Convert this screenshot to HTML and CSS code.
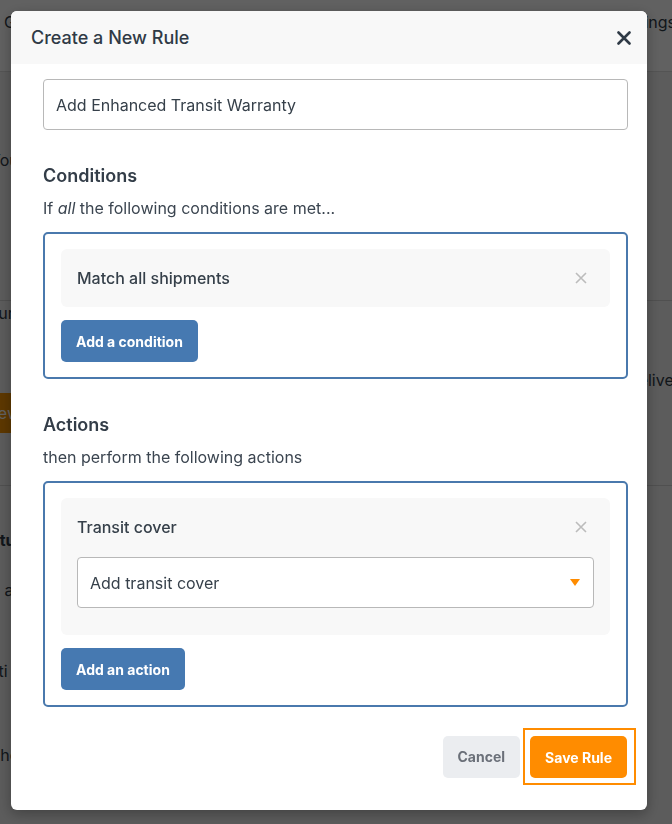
FILE: index.html
```html
<!DOCTYPE html>
<html lang="en">
<head>
    <meta charset="UTF-8">
    <meta name="viewport" content="width=device-width, initial-scale=1.0">
    <title>Create a New Rule</title>
    <link rel="stylesheet" href="styles.css">
</head>
<body>

    <!-- Page behind the modal -->
    <div class="page">
        <div class="page-top">
            <span class="peek">Go</span>
            <span class="peek-right">Settings</span>
        </div>
        <div class="page-row first">
            <p class="peek you">You</p>
        </div>
        <div class="page-row second">
            <p class="peek our">Our</p>
            <div class="page-line">
                <span class="page-btn">New</span>
                <span class="peek-right">Delivery</span>
            </div>
        </div>
        <div class="page-row third">
            <p class="peek status">Status</p>
            <p class="peek about"><span class="link">i</span> a</p>
            <p class="peek cond">Conditi<br>Te</p>
            <p class="peek the">The</p>
        </div>
    </div>

    <!-- Create Rule Modal -->
    <div class="overlay">
        <div class="modal">
            <div class="modal-header">
                <h2>Create a New Rule</h2>
                <span class="close">
                    <svg width="14" height="14" viewBox="0 0 14 14"><path d="M1.5 1.5 L12.5 12.5 M12.5 1.5 L1.5 12.5" stroke="#2f3a46" stroke-width="2.6" stroke-linecap="round"/></svg>
                </span>
            </div>

            <div class="modal-body">
                <div class="field">Add Enhanced Transit Warranty</div>

                <h3>Conditions</h3>
                <p class="hint">If <em>all</em> the following conditions are met...</p>
                <div class="rule-box">
                    <div class="rule-item">
                        <div class="rule-item-head">
                            <span>Match all shipments</span>
                            <span class="remove">
                                <svg width="12" height="12" viewBox="0 0 12 12"><path d="M1 1 L11 11 M11 1 L1 11" stroke="#bcbcbc" stroke-width="1.6"/></svg>
                            </span>
                        </div>
                    </div>
                    <button class="btn btn-blue">Add a condition</button>
                </div>

                <h3>Actions</h3>
                <p class="hint">then perform the following actions</p>
                <div class="rule-box">
                    <div class="rule-item padded">
                        <div class="rule-item-head">
                            <span>Transit cover</span>
                            <span class="remove">
                                <svg width="12" height="12" viewBox="0 0 12 12"><path d="M1 1 L11 11 M11 1 L1 11" stroke="#bcbcbc" stroke-width="1.6"/></svg>
                            </span>
                        </div>
                        <div class="field select">
                            <span>Add transit cover</span>
                            <span class="caret"></span>
                        </div>
                    </div>
                    <button class="btn btn-blue">Add an action</button>
                </div>
            </div>

            <div class="modal-footer">
                <button class="btn btn-grey">Cancel</button>
                <span class="focus-ring">
                    <button class="btn btn-orange">Save Rule</button>
                </span>
            </div>
        </div>
    </div>

</body>
</html>
```

FILE: styles.css
```css
/* General Styles */
body {
    font-family: Inter, "Noto Sans", sans-serif;
    margin: 0;
    padding: 0;
    background-color: #f1f1f1;
    color: #36404a;
}

/* Page behind */
.page {
    height: 824px;
    overflow: hidden;
    font-size: 16px;
    line-height: 20px;
    color: #2f3a46;
}

.page-top {
    height: 72px;
    background-color: #fff;
    border-bottom: 1px solid #ddd;
    display: flex;
    justify-content: space-between;
    align-items: flex-start;
    padding-top: 12px;
    box-sizing: border-box;
}

.page-top .peek {
    margin-left: 4px;
}

.page-top .peek-right {
    margin-right: -4px;
}

.page-row {
    display: flow-root;
    border-bottom: 1px solid #d2d2d2;
    box-sizing: border-box;
}

.page-row p {
    margin: 0;
}

.page-row.first {
    height: 229px;
}

.page-row.second {
    height: 185px;
}

.page-row.third {
    border-bottom: none;
}

.peek.you {
    margin: 78px 0 0 -10px;
}

.peek.our {
    margin: 2px 0 0 -14px;
}

.page-line {
    display: flex;
    justify-content: space-between;
    align-items: flex-start;
}

.page-btn {
    margin-top: 70px;
    width: 60px;
    height: 40px;
    margin-left: -40px;
    background-color: #f39200;
    color: #fff;
    line-height: 40px;
    text-align: right;
    padding-right: 4px;
}

.page-line .peek-right {
    margin-top: 47px;
    margin-right: -17px;
}

.peek.status {
    font-weight: 700;
    margin: 44px 0 0 -26px;
}

.peek.about {
    margin: 30px 0 0 -4px;
}

.link {
    color: #2a8cc8;
}

.peek.cond {
    margin: 58px 0 0 -46px;
    line-height: 27px;
}

.peek.the {
    margin: 33px 0 0 -10px;
}

/* Modal */
.overlay {
    position: fixed;
    top: 0;
    left: 0;
    width: 100%;
    height: 100%;
    background-color: rgba(0, 0, 0, 0.62);
    padding: 11px;
    box-sizing: border-box;
}

.modal {
    width: 636px;
    height: 799px;
    background-color: #fff;
    border-radius: 6px;
    box-shadow: 0 4px 14px rgba(0, 0, 0, 0.3);
    overflow: hidden;
    display: flex;
    flex-direction: column;
}

.modal-header {
    height: 53px;
    flex-shrink: 0;
    background-color: #f8f8f8;
    display: flex;
    justify-content: space-between;
    align-items: center;
    padding: 0 16px 0 20px;
}

.modal-header h2 {
    margin: 0;
    font-size: 18px;
    font-weight: 500;
    color: #2f3a46;
}

.close {
    display: flex;
    cursor: pointer;
}

.modal-body {
    padding: 15px 19px 0 32px;
}

.field {
    height: 51px;
    box-sizing: border-box;
    border: 1px solid #b8b8b8;
    border-radius: 4px;
    padding: 0 12px;
    display: flex;
    align-items: center;
    font-size: 16px;
    color: #36404a;
    background-color: #fff;
}

h3 {
    margin: 34px 0 8px 0;
    font-size: 18px;
    line-height: 24px;
    font-weight: 600;
    color: #333d48;
}

.hint {
    margin: 0 0 12px 0;
    font-size: 16px;
    line-height: 24px;
    color: #3b4550;
}

.rule-box {
    border: 2px solid #4a79ad;
    border-radius: 5px;
    padding: 15px 16px;
}

.rule-item {
    background-color: #f8f8f8;
    border-radius: 6px;
    padding: 0 16px;
    height: 58px;
    display: flex;
    flex-direction: column;
    justify-content: center;
}

.rule-item.padded {
    height: auto;
    padding: 16px 16px 27px 16px;
}

.rule-item-head {
    display: flex;
    justify-content: space-between;
    align-items: center;
    font-size: 16px;
    font-weight: 500;
    line-height: 26px;
    color: #36404a;
}

.remove {
    display: flex;
    padding: 0 7px;
    cursor: pointer;
}

.select {
    margin-top: 17px;
    justify-content: space-between;
    padding-right: 13px;
}

.caret {
    width: 0;
    height: 0;
    border-left: 5px solid transparent;
    border-right: 5px solid transparent;
    border-top: 7px solid #ff8c00;
}

/* Buttons */
.btn {
    font-family: Inter, "Noto Sans", sans-serif;
    font-size: 14px;
    font-weight: 700;
    height: 42px;
    padding: 0 15px;
    border: none;
    border-radius: 5px;
    cursor: pointer;
}

.btn-blue {
    margin-top: 13px;
    background-color: #4679b1;
    color: #fff;
}

.btn-grey {
    background-color: #ebedf0;
    color: #6b7079;
}

.btn-orange {
    background-color: #ff8c00;
    color: #fff;
}

.focus-ring {
    display: flex;
    border: 2px solid #ff8c00;
    padding: 6px 7px 5px 5px;
}

.modal-footer {
    display: flex;
    justify-content: flex-end;
    align-items: center;
    gap: 3px;
    padding: 21px 11px 0 0;
}
```
